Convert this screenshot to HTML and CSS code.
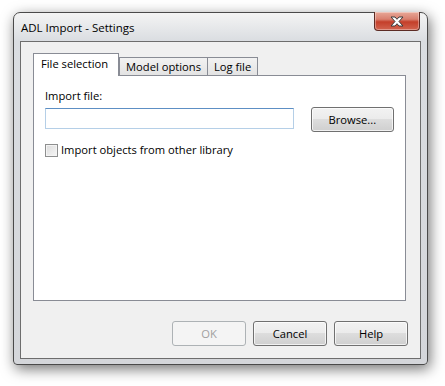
FILE: index.html
```html
<!DOCTYPE html>
<html lang="en">
<head>
    <meta charset="UTF-8">
    <meta name="viewport" content="width=device-width, initial-scale=1.0">
    <title>ADL Import - Settings</title>
    <link rel="stylesheet" href="styles.css">
</head>
<body>

<div class="window">
    <div class="titlebar">
        <span class="title">ADL Import - Settings</span>
        <button class="close" type="button">
            <svg width="16" height="11" viewBox="0 0 16 11">
                <path d="M2 1h4l2 2.3 2-2.3h4l-4 4.5 4 4.5h-4l-2-2.3-2 2.3h-4l4-4.5z" fill="#fff" stroke="#3c3c3c" stroke-width="1" stroke-linejoin="round"/>
            </svg>
        </button>
    </div>

    <div class="client">
        <div class="tabs">
            <div class="tab active">File selection</div>
            <div class="tab">Model options</div>
            <div class="tab">Log file</div>
        </div>

        <div class="panel">
            <div class="field-label">Import file:</div>
            <div class="file-row">
                <input type="text" class="file-input">
                <button type="button" class="btn browse">Browse...</button>
            </div>
            <label class="check">
                <span class="box"></span>
                Import objects from other library
            </label>
        </div>

        <div class="actions">
            <button type="button" class="btn" disabled>OK</button>
            <button type="button" class="btn">Cancel</button>
            <button type="button" class="btn">Help</button>
        </div>
    </div>
</div>

</body>
</html>
```

FILE: styles.css
```css
body {
    margin: 0;
    padding: 12px 17px 21px 13px;
    background-color: #ffffff;
    font-family: "Open Sans", "Noto Sans", sans-serif;
    font-size: 11.2px;
    color: #000;
}
.window {
    width: 415px;
    height: 353px;
    box-sizing: border-box;
    border: 1px solid #4a4a4a;
    border-radius: 7px 7px 4px 4px;
    background: linear-gradient(#f4f4f4 0px, #dadde1 28px, #d4d6da 100%);
    box-shadow: 2px 4px 14px rgba(0, 0, 0, 0.55);
    padding: 0 6px 5px 6px;
    display: flex;
    flex-direction: column;
}
.titlebar {
    height: 28px;
    display: flex;
    justify-content: space-between;
    align-items: flex-start;
}
.title {
    padding-top: 7px;
    padding-left: 1px;
    line-height: 15px;
    font-size: 11.5px;
}
.close {
    width: 46px;
    height: 19px;
    margin-right: 1px;
    margin-top: -1px;
    padding: 0;
    border: 1px solid #5c2b24;
    border-top: none;
    border-radius: 0 0 4px 4px;
    background: linear-gradient(#e8a898 0%, #d9806f 40%, #c43f2a 55%, #d2644f 100%);
    display: flex;
    align-items: center;
    justify-content: center;
    box-shadow: inset 0 0 0 1px rgba(255, 255, 255, 0.35);
}
.client {
    flex: 1;
    border: 1px solid #6d6d6d;
    background-color: #f0f0f0;
    padding: 12px 14px 12px 12px;
    display: flex;
    flex-direction: column;
}
.tabs {
    display: flex;
    align-items: flex-end;
    height: 21px;
    position: relative;
    z-index: 1;
}
.tab {
    height: 17px;
    padding: 0 6px;
    border: 1px solid #898c95;
    border-bottom: none;
    margin-left: -1px;
    background: linear-gradient(#f2f2f2, #e3e3e3);
    line-height: 17px;
}
.tab.active {
    height: 22px;
    margin-left: 0;
    margin-bottom: -1px;
    padding: 0 7px 0 7px;
    width: 70px;
    background: #fff;
    line-height: 19px;
}
.tab.active + .tab {
    margin-left: 0;
}
.panel {
    height: 226px;
    border: 1px solid #898c95;
    background-color: #fff;
    padding: 12px 11px 0 11px;
    box-sizing: border-box;
}
.field-label {
    line-height: 16px;
    margin-bottom: 3px;
}
.file-row {
    display: flex;
    align-items: flex-start;
    gap: 17px;
}
.file-input {
    width: 251px;
    height: 21px;
    box-sizing: border-box;
    margin: 1px 0 0 0;
    border: 1px solid #b5cfe7;
    border-top-color: #5d8fc4;
    background: #fff;
}
.btn {
    width: 74px;
    height: 25px;
    padding: 0;
    border: 1px solid #707070;
    border-radius: 3px;
    background: linear-gradient(#f2f2f2 0%, #ebebeb 50%, #dddddd 50%, #cfcfcf 100%);
    box-shadow: inset 0 0 0 1px rgba(255, 255, 255, 0.7);
    font-family: inherit;
    font-size: 11.2px;
    color: #000;
}
.btn.browse {
    width: 84px;
}
.btn:disabled {
    border-color: #adb2b5;
    background: #f4f4f4;
    box-shadow: none;
    color: #a0a0a0;
}
.check {
    display: flex;
    align-items: center;
    gap: 3px;
    margin-top: 10px;
    line-height: 16px;
}
.box {
    width: 13px;
    height: 13px;
    box-sizing: border-box;
    border: 1px solid #8e8f8f;
    background: linear-gradient(135deg, #dcdcdc, #f6f6f6);
    box-shadow: inset 0 0 0 1px #f4f4f4;
}
.actions {
    display: flex;
    justify-content: flex-end;
    gap: 7px;
    margin-top: 20px;
    margin-right: -2px;
}
```
